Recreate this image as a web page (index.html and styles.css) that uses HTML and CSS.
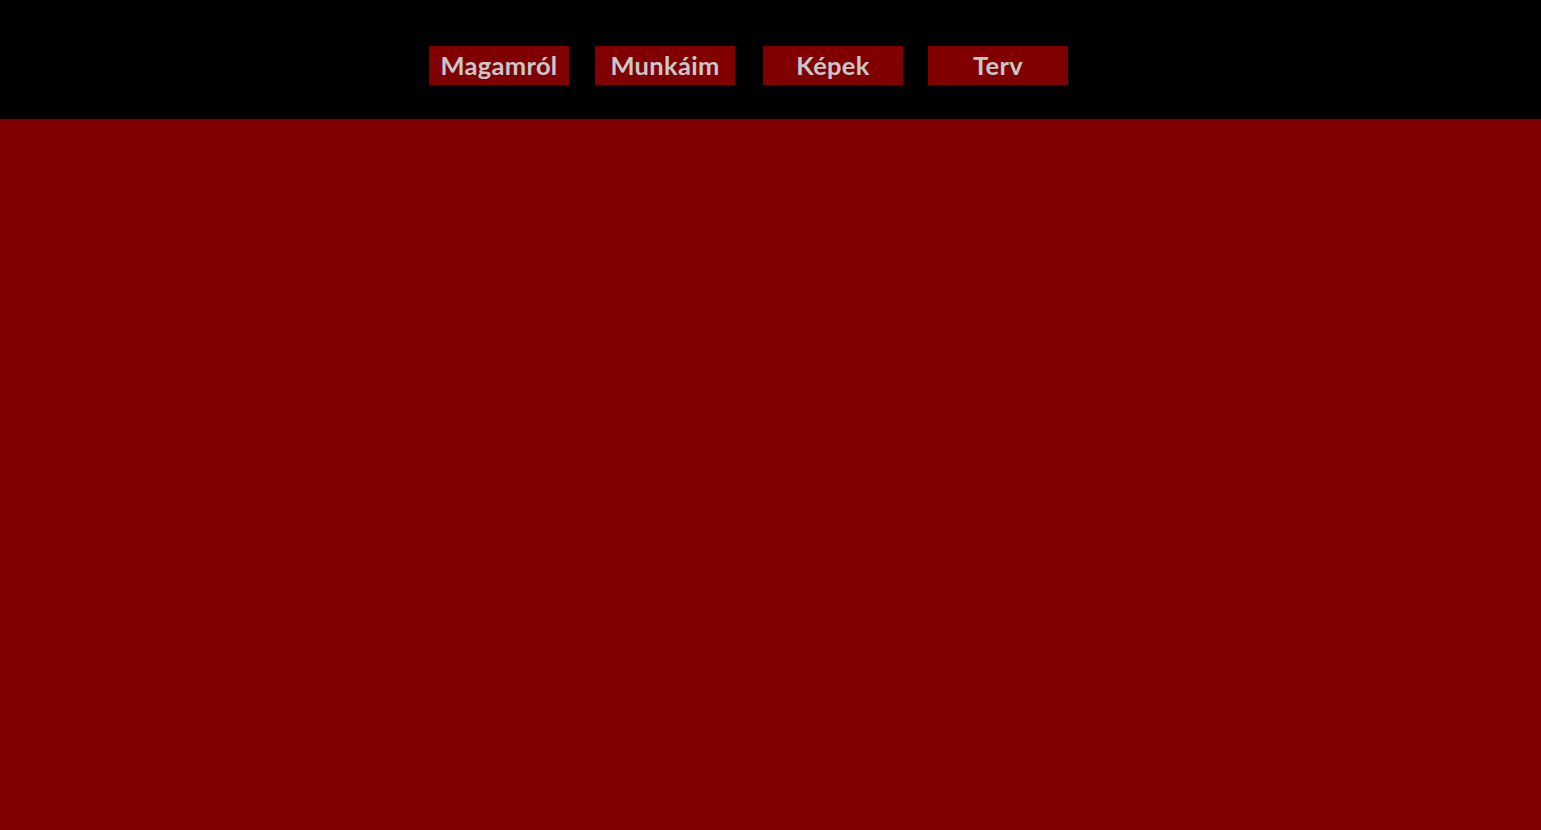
FILE: index.html
```html
<!DOCTYPE html>
<html lang="hu">
<head>
<meta charset="utf-8">
<title>Magamról</title>
<link rel="stylesheet" href="styles.css">
</head>
<body>
<header class="header">
  <nav class="nav">
    <a class="nav-btn" href="#">Magamról</a>
    <a class="nav-btn nav-btn-2" href="#">Munkáim</a>
    <a class="nav-btn nav-btn-3" href="#">Képek</a>
    <a class="nav-btn nav-btn-4" href="#">Terv</a>
  </nav>
</header>
<main class="content"></main>
</body>
</html>
```
FILE: styles.css
```css
html, body {
  margin: 0;
  padding: 0;
  height: 100%;
}
body {
  background: #800000;
  font-family: Lato, "Open Sans", sans-serif;
  display: flex;
  flex-direction: column;
}
.header {
  background: #000;
  height: 119px;
  box-sizing: border-box;
  padding-top: 46px;
}
.nav {
  display: flex;
  padding-left: 429px;
}
.nav-btn {
  display: flex;
  align-items: center;
  justify-content: center;
  width: 140px;
  height: 39px;
  background: #800000;
  color: #c8c8cc;
  font-weight: 700;
  font-size: 25.5px;
  letter-spacing: 0.3px;
  text-decoration: none;
  line-height: 1;
}
.nav-btn-2 { margin-left: 26px; }
.nav-btn-3 { margin-left: 28px; }
.nav-btn-4 { margin-left: 25px; }
.content {
  flex: 1;
}
```
